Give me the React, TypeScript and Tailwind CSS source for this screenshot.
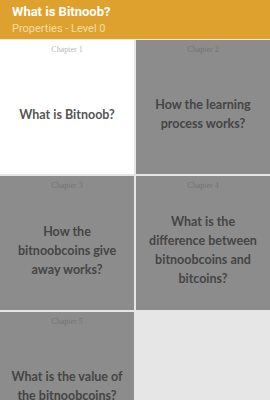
import clsx from "clsx";

const chapters = [
  { label: "Chapter 1", title: "What is Bitnoob?", active: true },
  { label: "Chapter 2", title: "How the learning process works?" },
  { label: "Chapter 3", title: "How the bitnoobcoins give away works?" },
  { label: "Chapter 4", title: "What is the difference between bitnoobcoins and bitcoins?" },
  { label: "Chapter 5", title: "What is the value of the bitnoobcoins?" },
];

export default function App() {
  return (
    <div className="w-[270px] h-[400px] overflow-hidden bg-[#e6e6e6] font-['Open_Sans',sans-serif]">
      <div className="h-[39px] bg-[#dea12e] pl-[12px] pt-[3px]">
        <div className="font-['Roboto',sans-serif] text-[13px] font-bold leading-[18px] text-white">What is Bitnoob?</div>
        <div className="font-['Roboto',sans-serif] text-[11px] leading-[15px] text-[#f6dcaa]">Properties - Level 0</div>
      </div>
      <div className="grid grid-cols-[134px_134px] gap-[2px] pt-[1px]">
        {chapters.map((c) => (
          <ChapterCard key={c.label} {...c} />
        ))}
      </div>
    </div>
  );
}

function ChapterCard({ label, title, active }: { label: string; title: string; active?: boolean }) {
  return (
    <div
      className={clsx(
        "h-[134px] flex flex-col items-center px-[8px]",
        active ? "bg-white" : "bg-[#8c8c8c]",
      )}
    >
      <div
        className={clsx(
          "pt-[4px] text-[8px] leading-[12px] font-['Liberation_Serif',serif]",
          active ? "text-[#b8b8b8]" : "text-[#747474]",
        )}
      >
        {label}
      </div>
      <div className="flex flex-1 items-center justify-center pb-[2px]">
        <p
          className={clsx(
            "text-center font-['Lato',sans-serif] text-[12.5px] font-bold leading-[19px]",
            active ? "text-[#555]" : "text-[#454545]",
          )}
        >
          {title}
        </p>
      </div>
    </div>
  );
}
